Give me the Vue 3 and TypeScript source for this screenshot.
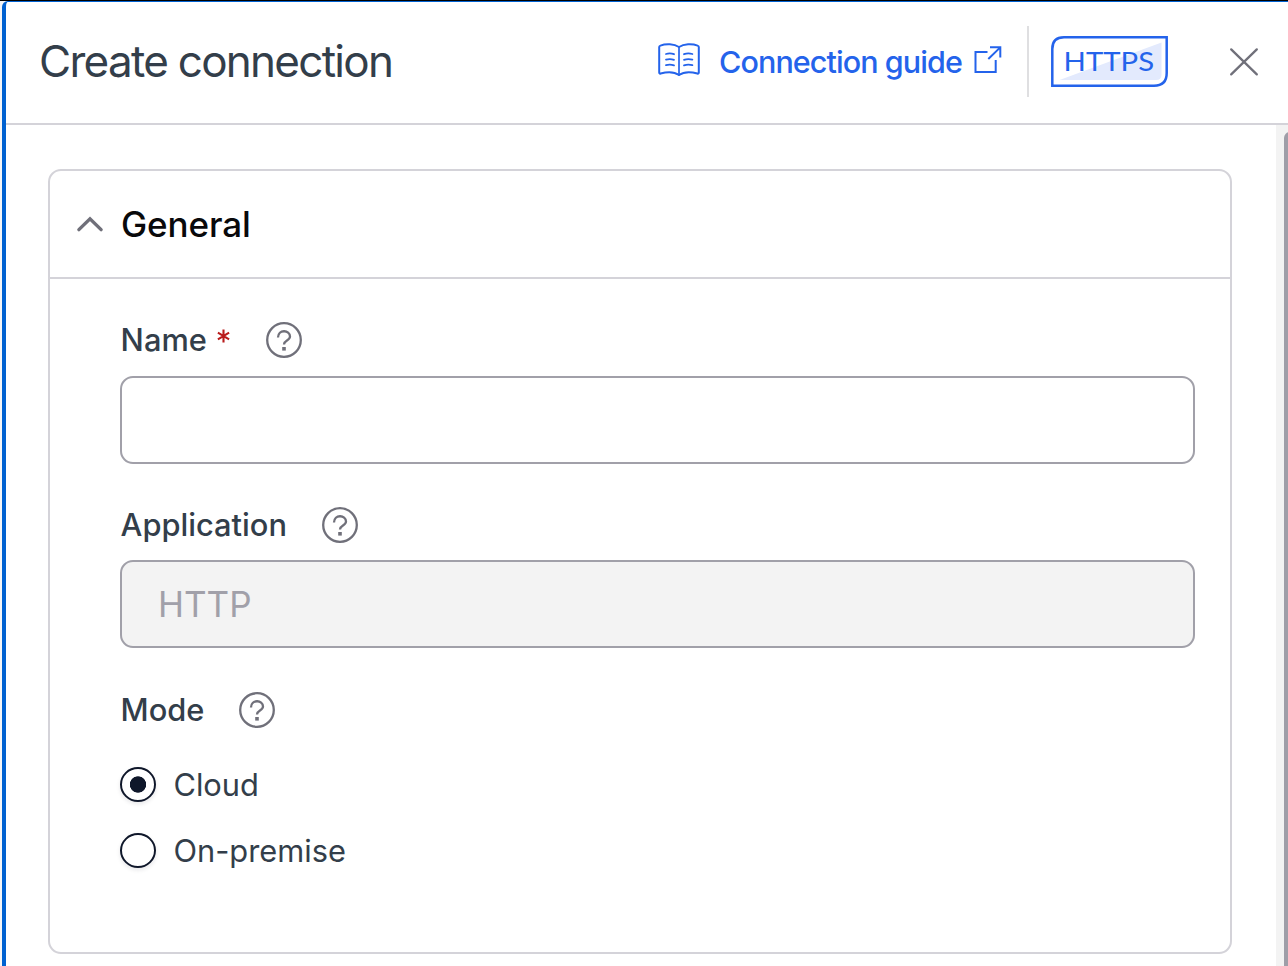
<script setup lang="ts">
import { ref } from 'vue'

type Mode = 'cloud' | 'premise'

const name = ref('')
const application = ref('HTTP')
const mode = ref<Mode>('cloud')
const expanded = ref(true)
const modes: { value: Mode; label: string }[] = [
  { value: 'cloud', label: 'Cloud' },
  { value: 'premise', label: 'On-premise' },
]
</script>

<template>
  <div class="window">
    <div class="drawer">
      <header class="header">
        <h1 class="title">Create connection</h1>
        <a class="guide">
          <svg class="book" width="42" height="34" viewBox="0 0 42 34" fill="none" stroke="currentColor" stroke-linejoin="round" stroke-linecap="round">
            <path stroke-width="2" d="M21 4C16 .8 8 .5 2.4 2.6Q1.2 3 1.2 4V29.6Q1.2 31 2.6 30.5C9 28.7 16.5 28.8 21 32C25.5 28.8 33 28.7 39.4 30.5Q40.8 31 40.8 29.6V4Q40.8 3 39.6 2.6C34 .5 26 .8 21 4Z" />
            <path stroke-width="1.7" d="M21 4V32" />
            <path stroke-width="1.8" d="M8 11Q12 9.8 16 11.2M8 16.6Q12 15.4 16 16.8M8 22.2Q12 21 16 22.4M26 11.2Q30 9.8 34.4 11M26 16.8Q30 15.4 34.4 16.6M26 22.4Q30 21 34.4 22.2" />
          </svg>
          <span class="guide-text">Connection guide</span>
          <svg class="external" width="28" height="28" viewBox="0 0 28 28" fill="none" stroke="currentColor" stroke-width="2">
            <path d="M13.5 6H1.5V26H21.7V14" />
            <path d="M16 1.3H26.3V11.5M26 1.6L14.3 13" />
          </svg>
        </a>
        <span class="separator"></span>
        <svg class="badge" width="117" height="51" viewBox="0 0 117 51">
          <path d="M8.5 44L110.5 6.5V39Q110.5 44 105 44Z" fill="#e3eafd" />
          <path d="M13 1.3H115.7V37Q115.7 49.7 103 49.7H1.3V13Q1.3 1.3 13 1.3Z" fill="none" stroke="#2463eb" stroke-width="2.5" />
          <text class="badge-text" x="12.6" y="34.8" textLength="90.5" lengthAdjust="spacingAndGlyphs">HTTPS</text>
        </svg>
        <button class="close" aria-label="Close">
          <svg width="30" height="30" viewBox="0 0 30 30" fill="none" stroke="currentColor" stroke-width="2.3" stroke-linecap="round">
            <path d="M2.2 2.4L27.8 27.4M27.8 2.4L2.2 27.4" />
          </svg>
        </button>
      </header>

      <div class="body">
        <main class="content">
          <section class="card">
            <button class="card-head" @click="expanded = !expanded">
              <svg width="28" height="18" viewBox="0 0 28 18" fill="none" stroke="#70707a" stroke-width="3.4" stroke-linecap="round" stroke-linejoin="miter">
                <path d="M2.9 14.6L14 3.8L25.1 14.6" />
              </svg>
              <span class="card-title">General</span>
            </button>
            <div v-if="expanded" class="fields">
              <div class="field">
                <div class="label-row">
                  <label class="label name-label">Name</label>
                  <svg class="required" width="13" height="14" viewBox="0 0 13 14" stroke="#b91c1c" stroke-width="2.1">
                    <path d="M6.5 .5V13.5M.9 3.7L12.1 10.3M12.1 3.7L.9 10.3" />
                  </svg>
                  <svg class="help" viewBox="0 0 36 36"><circle cx="18" cy="18" r="16.8" /><path d="M12 15.5C12 7.2 24 7.4 24 14.6C24 18.7 18 18.4 18 22.4" /><rect x="16.2" y="25" width="3.6" height="3.6" /></svg>
                </div>
                <input v-model="name" class="input" type="text" />
              </div>
              <div class="field second">
                <div class="label-row">
                  <label class="label app-label">Application</label>
                  <svg class="help" viewBox="0 0 36 36"><circle cx="18" cy="18" r="16.8" /><path d="M12 15.5C12 7.2 24 7.4 24 14.6C24 18.7 18 18.4 18 22.4" /><rect x="16.2" y="25" width="3.6" height="3.6" /></svg>
                </div>
                <div class="input disabled">{{ application }}</div>
              </div>
              <div class="field">
                <div class="label-row">
                  <label class="label mode-label">Mode</label>
                  <svg class="help" viewBox="0 0 36 36"><circle cx="18" cy="18" r="16.8" /><path d="M12 15.5C12 7.2 24 7.4 24 14.6C24 18.7 18 18.4 18 22.4" /><rect x="16.2" y="25" width="3.6" height="3.6" /></svg>
                </div>
                <div class="radios">
                  <label v-for="m in modes" :key="m.value" class="radio">
                    <input v-model="mode" type="radio" name="mode" :value="m.value" />
                    <span>{{ m.label }}</span>
                  </label>
                </div>
              </div>
            </div>
          </section>
        </main>
        <div class="track"><div class="thumb"></div></div>
      </div>
    </div>
  </div>
</template>

<style>
body {
  background: #fff;
}
</style>

<style scoped>
.window {
  box-sizing: border-box;
  width: 1288px;
  height: 966px;
  overflow: hidden;
  padding-left: 2px;
  border-top: 1px solid #000;
  background: #f5f6f8;
  font-family: Inter, "Liberation Sans", sans-serif;
  color: #333e4a;
}
.drawer {
  box-sizing: border-box;
  height: 965px;
  display: flex;
  flex-direction: column;
  border-left: 4px solid #0061d1;
  border-top: 1px solid #0061d1;
  border-top-left-radius: 6px;
  background: #fff;
}
.header {
  box-sizing: border-box;
  flex: none;
  height: 123px;
  display: flex;
  align-items: center;
  padding: 0 29px 2px 33px;
  border-bottom: 2px solid #d4d3d9;
}
.title {
  margin: 0;
  padding-bottom: 1px;
  flex: 1;
  font-size: 44px;
  font-weight: 400;
  line-height: 60px;
  letter-spacing: -1.72px;
  white-space: nowrap;
}
.guide {
  display: flex;
  align-items: center;
  color: #2463eb;
}
.book {
  margin: -3px 19px 0 0;
}
.guide-text {
  width: 243px;
  font-size: 30.5px;
  font-weight: 500;
  line-height: 40px;
  letter-spacing: -0.92px;
  white-space: nowrap;
}
.external {
  margin: -3px 0 0 12px;
}
.separator {
  width: 2px;
  height: 71px;
  margin: 0 22px 0 25px;
  background: #dfdfe1;
}
.badge {
  margin-right: 61px;
}
.badge-text {
  font-family: Lato, sans-serif;
  font-size: 27.5px;
  fill: #2463eb;
}
.close {
  display: flex;
  padding: 0;
  border: 0;
  background: none;
  color: #70707a;
}
.body {
  flex: 1;
  min-height: 0;
  display: flex;
}
.content {
  flex: 1;
  padding: 44px 44px 0 42px;
}
.card {
  box-sizing: border-box;
  height: 785px;
  border: 2px solid #d4d3d9;
  border-radius: 13px;
}
.card-head {
  box-sizing: border-box;
  width: 100%;
  height: 108px;
  display: flex;
  align-items: center;
  gap: 17px;
  padding: 0 0 0 26px;
  border: 0;
  border-bottom: 2px solid #d4d3d9;
  background: none;
  font: inherit;
  color: #09090b;
}
.card-title {
  font-size: 35px;
  font-weight: 500;
  line-height: 48px;
  letter-spacing: -0.1px;
}
.fields {
  padding: 41px 35px 0 70px;
}
.label-row {
  display: flex;
  align-items: center;
  height: 40px;
}
.label {
  box-sizing: border-box;
  padding-left: 0.6px;
  font-size: 30.8px;
  font-weight: 500;
  line-height: 40px;
  white-space: nowrap;
}
.name-label {
  width: 97px;
}
.app-label {
  width: 202px;
}
.mode-label {
  width: 119px;
}
.required {
  margin: -8px 36px 0 0;
}
.help {
  width: 36px;
  height: 36px;
  fill: none;
  stroke: #70707a;
  stroke-width: 2.3;
}
.help rect {
  fill: #70707a;
  stroke: none;
}
.input {
  box-sizing: border-box;
  display: block;
  width: 1075px;
  height: 88px;
  margin: 16px 0 41px;
  padding: 0 36px;
  border: 2px solid #a1a0a9;
  border-radius: 13px;
  outline: none;
  background: transparent;
  font-family: inherit;
  font-size: 35px;
  line-height: 84px;
}
.disabled {
  margin-top: 15px;
  margin-bottom: 42px;
  background: #f3f3f3;
  color: #a1a0a9;
}
.radios {
  display: flex;
  flex-direction: column;
  gap: 26px;
  margin-top: 34px;
}
.radio {
  display: flex;
  align-items: center;
  gap: 17.4px;
  height: 40px;
  font-size: 30.8px;
  margin: 0;
}
.radio input {
  box-sizing: border-box;
  appearance: none;
  width: 36px;
  height: 35px;
  margin: 0;
  border: 2px solid #0f172a;
  border-radius: 50%;
  box-shadow: 0 2px 4px rgba(15, 23, 42, 0.1);
}
.radio input:checked {
  background: radial-gradient(circle, #0f172a 7.8px, transparent 8.5px);
}
.track {
  box-sizing: border-box;
  width: 12px;
  padding: 7px 0 0 8px;
  overflow: hidden;
  background: #f3f3f3;
}
.thumb {
  width: 12px;
  height: 900px;
  border-radius: 6px;
  background: #9f9ea8;
}
</style>
